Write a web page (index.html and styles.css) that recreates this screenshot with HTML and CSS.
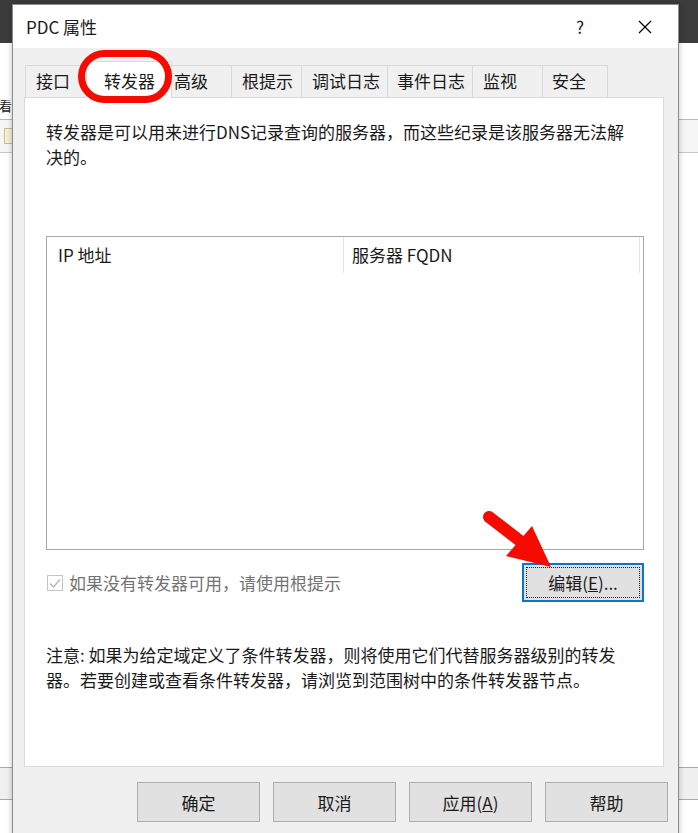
FILE: index.html
```html
<!DOCTYPE html>
<html lang="zh-CN">
<head>
    <meta charset="UTF-8">
    <title>PDC 属性</title>
    <link rel="stylesheet" href="styles.css">
</head>
<body>
    <div class="backdrop">
        <div class="bd-top"></div>
        <div class="bd-menu"><span class="bd-word">看</span></div>
        <div class="bd-tools"><span class="bd-icon"></span></div>
        <div class="bd-fill"></div>
        <div class="bd-band"></div>
        <div class="bd-rest"></div>
    </div>

    <div class="dialog">
        <div class="titlebar">
            <span class="title">PDC 属性</span>
            <span class="title-btn">?</span>
            <span class="title-btn">
                <svg width="14" height="14" viewBox="0 0 14 14"><path d="M1 1L13 13M13 1L1 13" stroke="#000" stroke-width="1.2" fill="none"/></svg>
            </span>
        </div>
        <div class="dlg-body">
            <div class="tabs">
                <div class="tab t-iface">接口</div>
                <div class="tab tab-on t-fwd">转发器</div>
                <div class="tab t-adv">高级</div>
                <div class="tab t-root">根提示</div>
                <div class="tab t-debug">调试日志</div>
                <div class="tab t-event">事件日志</div>
                <div class="tab t-mon">监视</div>
                <div class="tab t-sec">安全</div>
            </div>
            <div class="panel">
                <p class="desc">转发器是可以用来进行DNS记录查询的服务器，而这些纪录是该服务器无法解<br>决的。</p>
                <div class="list">
                    <div class="list-head">
                        <div class="col col-ip">IP 地址</div>
                        <div class="col col-fqdn">服务器 FQDN</div>
                    </div>
                </div>
                <div class="opt-row">
                    <label class="chk">
                        <span class="chk-box">
                            <svg width="14" height="14" viewBox="0 0 14 14"><path d="M2 7.5L5.5 11L12 3.5" stroke="#b5b5b5" stroke-width="1.3" fill="none"/></svg>
                        </span>
                        <span class="chk-text">如果没有转发器可用，请使用根提示</span>
                    </label>
                    <button class="btn btn-edit">编辑(<u>E</u>)...</button>
                </div>
                <p class="note">注意: 如果为给定域定义了条件转发器，则将使用它们代替服务器级别的转发<br>器。若要创建或查看条件转发器，请浏览到范围树中的条件转发器节点。</p>
            </div>
            <div class="actions">
                <button class="btn">确定</button>
                <button class="btn">取消</button>
                <button class="btn">应用(<u>A</u>)</button>
                <button class="btn">帮助</button>
            </div>
        </div>
    </div>

    <div class="mark-ring"></div>
    <svg class="mark-arrow" width="698" height="833" viewBox="0 0 698 833">
        <path d="M489 517L528 547" stroke="#f40c00" stroke-width="12" stroke-linecap="round" fill="none"/>
        <polygon points="532,526 506,556 551,567" fill="#f40c00"/>
    </svg>
</body>
</html>
```

FILE: styles.css
```css
*{
    margin: 0;
    padding: 0;
    box-sizing: border-box;
}
body{
    width: 698px;
    height: 833px;
    overflow: hidden;
    position: relative;
    font-family: "Noto Sans CJK SC", "Microsoft YaHei", sans-serif;
    font-size: 17px;
    color: #1a1a1a;
    background: #fff;
}

/* app window behind the dialog */
.backdrop{
    display: flex;
    flex-direction: column;
    height: 833px;
}
.bd-top{
    height: 43px;
    background: #3c3c3c;
}
.bd-menu{
    height: 77px;
    padding-top: 48px;
    border-bottom: 1px solid #b9b9b9;
}
.bd-word{
    display: inline-block;
    margin-left: -1px;
    font-size: 13px;
}
.bd-tools{
    height: 33px;
    background: #f6f6f6;
    border-bottom: 1px solid #c9c9c9;
    padding: 8px 0 0 4px;
}
.bd-icon{
    display: block;
    width: 14px;
    height: 16px;
    border: 1px solid #c8bd8c;
    background: #f4efd6;
}
.bd-fill{
    flex: 1;
}
.bd-band{
    height: 33px;
    background: #f0f0f0;
    border-top: 1px solid #a9a9a9;
    border-bottom: 1px solid #a9a9a9;
}
.bd-rest{
    height: 33px;
}

/* dialog */
.dialog{
    position: absolute;
    left: 12px;
    top: 4px;
    width: 667px;
    height: 850px;
    border: 1px solid #8c8c8c;
    background: #f0f0f0;
    box-shadow: 0 0 6px rgba(0,0,0,0.25);
}
.titlebar{
    height: 43px;
    background: #fff;
    display: flex;
    align-items: center;
    padding: 0 10px 0 13px;
}
.title{
    flex: 1;
}
.title-btn{
    width: 46px;
    height: 43px;
    display: flex;
    align-items: center;
    justify-content: center;
    margin-left: 19px;
}
.dlg-body{
    padding: 17px 14px 0 11px;
}

.tabs{
    display: flex;
    height: 32px;
    margin-left: 1px;
    position: relative;
    z-index: 2;
}
.tab{
    height: 32px;
    line-height: 30px;
    border: 1px solid #d9d9d9;
    border-bottom: none;
    margin-right: -1px;
    background: #f0f0f0;
    padding-left: 10px;
    white-space: nowrap;
}
.tab-on{
    background: #fff;
    height: 37px;
    margin-top: -4px;
    line-height: 37px;
    margin-left: -2px;
    margin-right: -3px;
    position: relative;
    z-index: 3;
}
.t-iface{ width: 64px; }
.t-fwd{ width: 86px; padding-left: 17px; }
.t-adv{ width: 63px; padding-left: 4px; }
.t-root{ width: 71px; }
.t-debug{ width: 87px; }
.t-event{ width: 86px; padding-left: 9px; }
.t-mon{ width: 71px; }
.t-sec{ width: 66px; padding-left: 9px; }

.panel{
    height: 670px;
    background: #fff;
    border: 1px solid #d9d9d9;
    padding: 21px 20px 0 21px;
    position: relative;
    z-index: 1;
}
.desc{
    line-height: 25px;
}
.list{
    margin-top: 67px;
    width: 598px;
    height: 314px;
    border: 1px solid #a8a8a8;
}
.list-head{
    display: flex;
    height: 36px;
}
.col{
    line-height: 36px;
    border-right: 1px solid #e5e5e5;
    padding-left: 11px;
}
.col-ip{ width: 297px; }
.col-fqdn{ width: 296px; padding-left: 8px; }

.opt-row{
    display: flex;
    align-items: center;
    justify-content: space-between;
    margin-top: 13px;
    width: 598px;
}
.chk{
    display: flex;
    align-items: center;
    margin-left: 1px;
}
.chk-box{
    width: 16px;
    height: 16px;
    border: 1px solid #c4c4c4;
    display: flex;
    align-items: center;
    justify-content: center;
}
.chk-text{
    margin-left: 6px;
    color: #737373;
}
.btn{
    width: 123px;
    height: 40px;
    border: 1px solid #adadad;
    background: #e1e1e1;
    font-family: inherit;
    font-size: 17px;
    color: #1a1a1a;
}
.btn-edit{
    width: 122px;
    height: 39px;
    border: 2px solid #0a74d0;
    outline: 1px dotted #222;
    outline-offset: -5px;
}
.note{
    margin-top: 40px;
    line-height: 25px;
}
.actions{
    display: flex;
    justify-content: flex-end;
    gap: 13px;
    margin-top: 15px;
    margin-right: -4px;
}

/* red annotations */
.mark-ring{
    position: absolute;
    left: 78px;
    top: 50px;
    width: 94px;
    height: 53px;
    border: 7px solid #f40c00;
    border-radius: 27px;
    z-index: 10;
}
.mark-arrow{
    position: absolute;
    left: 0;
    top: 0;
    z-index: 10;
    pointer-events: none;
}
```
